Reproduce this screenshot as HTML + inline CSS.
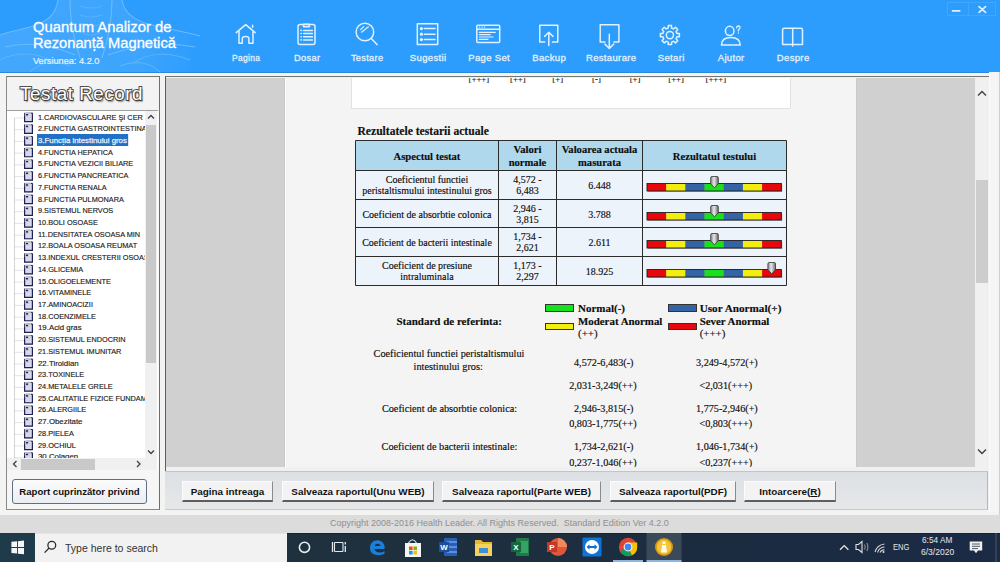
<!DOCTYPE html>
<html><head><meta charset="utf-8">
<style>
*{box-sizing:border-box;margin:0;padding:0}
html,body{width:1000px;height:562px;overflow:hidden;background:#f0f0f0;font-family:"Liberation Sans",sans-serif;position:relative}
.a{position:absolute}
#hdr{left:0;top:0;width:1000px;height:72.5px;background:#2c9dfd;border-bottom:1.5px solid #2a88e2}
body{background:#f3f4f2}
.ttl{color:#fff;-webkit-text-stroke:0.3px #fff;font-size:14.7px;left:33px;white-space:nowrap;line-height:16px}
.nav{color:#e4f1ff;-webkit-text-stroke:0.3px #e4f1ff;letter-spacing:0.35px;text-indent:0.35px;font-size:9.5px;top:52.4px;width:80px;text-align:center;white-space:nowrap}
.ico{top:20px}
#leftp{left:6px;top:76px;width:154px;height:434px;border:1px solid #8a8a8a;border-top:1.4px solid #76766c;border-right:1.3px solid #6e6e6e;background:#f6f6f6}
#tree{left:7px;top:110px;width:151px;height:360px;background:#fff;border-top:1px solid #a0a0a0;overflow:hidden}
.ti{position:absolute;left:31px;transform:scaleX(0.915);transform-origin:0 0;font-size:8px;color:#1a1a1a;-webkit-text-stroke:0.15px #1a1a1a;white-space:nowrap;line-height:11px}
.sel{color:#e8f2ff;-webkit-text-stroke:0.25px #e8f2ff}
.sel:before{content:"";position:absolute;left:-0.6px;top:-0.5px;width:92.6px;height:11.2px;background:#2270c6;z-index:-1}
#tree{z-index:1}
#midp{left:165px;top:76px;width:824px;height:434px;border-top:1.5px solid #76766c;border-left:1.2px solid #5e5e5e;background:#f0f0f0}
#doc{left:166px;top:77.5px;width:809px;height:389px;background:#d0d0d0;overflow:hidden}
#page{left:120px;top:0;width:572px;height:389px;background:#f5f5f5}
.d{position:absolute;font-family:"Liberation Serif",serif;white-space:nowrap;color:#0d0d0d;-webkit-text-stroke:0.15px #0d0d0d}
.serif{font-family:"Liberation Serif",serif}
table.res{position:absolute;border-collapse:collapse;font-family:"Liberation Serif",serif;font-size:10.2px;color:#111}
.btn{position:absolute;top:481px;height:21px;background:#f3f3f3;border-right:1.5px solid #8a8a8a;border-bottom:2px solid #5e5e5e;border-top:1px solid #fcfcfc;border-left:1px solid #fcfcfc;font-weight:bold;font-size:9.9px;text-align:center;line-height:19.5px;color:#111;white-space:nowrap}
#bar{left:165px;top:471px;width:823px;height:39px;background:linear-gradient(#dce0e4,#e6e7e9);border-top:1px solid #c4c4c4;border-right:1px solid #b8b8b8;border-bottom:1px solid #c8c8c8}
#foot{left:0;top:514.5px;width:1000px;height:18.5px;background:#dcdcdc}
#task{left:0;top:532.5px;width:1000px;height:29.5px;background:linear-gradient(90deg,#1f3440 0%,#1e303e 40%,#1c2c40 70%,#1b2a45 100%);border-top:1px solid #18222c}
</style></head><body>
<div id="hdr" class="a"></div>
<svg class="a" style="left:0;top:0" width="1000" height="72" viewBox="0 0 1000 72"><defs><linearGradient id="hfade" x1="0" x2="1" y1="0" y2="0"><stop offset="0" stop-color="#fff" stop-opacity="0.22"/><stop offset="0.7" stop-color="#fff" stop-opacity="0.16"/><stop offset="1" stop-color="#fff" stop-opacity="0"/></linearGradient></defs>
<g fill="none" stroke="#a9d6fb" stroke-width="1.1" opacity="0.5">
<path d="M58,0 C56,14 48,22 30,27 C15,31 5,33 0,35 V72 H200 V36 C185,32 165,28 148,24 C132,19 124,12 122,0 Z" fill="url(#hfade)" stroke="none"/><path d="M58,0 C56,14 48,22 30,27 C15,31 5,33 0,35 M200,36 C185,32 165,28 148,24 C132,19 124,12 122,0"/>
<path d="M70,0 C70,20 74,40 80,58 M112,0 C112,20 108,40 102,58" />
<path d="M80,6 Q91,10 102,6 M80,15 Q91,19 102,15 M80,24 Q91,28 102,24 M82,33 Q91,37 100,33" opacity="0.6"/>
<path d="M5,47 C25,42 50,44 75,55 M195,47 C170,42 140,44 108,55"/>
<path d="M0,60 C15,52 35,52 50,60 M190,60 C170,52 150,52 135,62 M30,72 C40,62 55,60 70,66 M160,72 C150,62 135,60 120,66" opacity="0.7"/>
</g>
<g fill="none" stroke="#e2f1ff" stroke-width="1.5" stroke-linejoin="round" stroke-linecap="round">
<!-- home -->
<path d="M236.2,32.6 L245.7,24.6 L255.2,32.6 M239,31 L239,43.2 L242.3,43.2 L242.3,38.5 Q242.3,36.5 245.6,36.5 Q248.9,36.5 248.9,38.5 L248.9,43.2 L253,43.2 L253,31 M252.6,25.2 L252.6,27.2"/>
<!-- clipboard -->
<rect x="298" y="24.6" width="17" height="19.8" rx="2"/>
<path d="M303.5,26.8 L303.5,24.2 L309.3,24.2 L309.3,26.8 Z"/>
<path d="M303.6,30.4 H312.4 M303.6,33.5 H312.4 M303.6,36.7 H312.4 M303.6,39.9 H312.4"/>
<path d="M301,30.4 h0.3 M301,33.5 h0.3 M301,36.7 h0.3 M301,39.9 h0.3" stroke-width="1.6"/>
<!-- magnifier -->
<circle cx="364.9" cy="32" r="8.8"/>
<path d="M371.3,38.6 L377,44.6"/>
<path d="M360.6,29.6 L363.8,26.6 M361.5,32.2 L368.4,26.8" stroke-width="1.2"/>
<!-- list -->
<rect x="417.3" y="23.8" width="20.4" height="20.6"/>
<path d="M424.3,28.6 H435 M424.3,34.2 H435 M424.3,39.6 H435"/>
<circle cx="421.4" cy="28.6" r="0.9" fill="#e2f1ff"/><circle cx="421.4" cy="34.2" r="0.9" fill="#e2f1ff"/><circle cx="421.4" cy="39.6" r="0.9" fill="#e2f1ff"/>
<!-- page set -->
<rect x="476.8" y="25.2" width="22.9" height="17.3" rx="1"/>
<path d="M476.8,29.3 H499.7"/>
<path d="M479.3,32.4 H495.2 M479.3,34.7 H490.2 M479.3,37 H493 M479.3,39.4 H488" stroke-width="1.2"/>
<path d="M479.4,27.2 h0.2 M481.9,27.2 h0.2 M484.4,27.2 h0.2" stroke-width="1.3"/>
<!-- backup -->
<path d="M544.7,41.9 H539.8 V25.2 H557.8 V41.9 H552.4"/>
<path d="M548.8,45.5 V32.2 M544.6,36.4 L548.8,32.2 L553,36.4"/>
<!-- restore -->
<path d="M604.9,42.1 H600.2 V24.8 H618.9 V42.1 H613.9"/>
<path d="M609.3,34.2 V48.4 M604.8,44 L609.3,48.4 L613.8,44"/>
<!-- gear -->
<path d="M679.4,33.5 L679.4,36.7 L676.9,36.8 L676.1,38.8 L677.7,40.7 L675.5,42.9 L673.6,41.3 L671.6,42.1 L671.5,44.6 L668.3,44.6 L668.2,42.1 L666.2,41.3 L664.3,42.9 L662.1,40.7 L663.7,38.8 L662.9,36.8 L660.4,36.7 L660.4,33.5 L662.9,33.4 L663.7,31.4 L662.1,29.5 L664.3,27.3 L666.2,28.9 L668.2,28.1 L668.3,25.6 L671.5,25.6 L671.6,28.1 L673.6,28.9 L675.5,27.3 L677.7,29.5 L676.1,31.4 L676.9,33.4Z"/>
<circle cx="669.9" cy="35.1" r="3.6"/>
<!-- help person -->
<ellipse cx="729.7" cy="30.9" rx="4.3" ry="4.6"/>
<path d="M721.4,45 Q721.6,37.4 730.8,37.4 Q740,37.4 740.3,45 Z"/>
<path d="M736.6,27.8 Q736.8,26 738.4,26 Q740.2,26.1 740,27.7 Q739.8,29 738.4,29.8 L738.4,31" stroke-width="1.3"/>
<path d="M738.4,32.8 v0.3" stroke-width="1.3"/>
<!-- book -->
<path d="M792.7,28.2 H784.2 Q782.6,28.2 782.6,29.8 V44.6 H792.7 V46 M792.7,28.2 V44.6 M792.7,28.2 H800.9 Q802.5,28.2 802.5,29.8 V44.6 H792.7"/>
</g>
<g fill="none" stroke="#9fd0ff" stroke-width="1" opacity="0.18"><rect x="947.5" y="2.5" width="48" height="13"/><path d="M968.5,2.5 V15.5"/></g>
<g stroke="#dff1ff" stroke-width="1.6" fill="none" stroke-linecap="round">
<path d="M952.5,10.9 H959.8"/>
<path d="M979,6.6 L985.6,12.4 M985.6,6.6 L979,12.4"/>
</g>
</svg>
<div class="a ttl" style="top:19.2px;left:33px;font-size:14.85px">Quantum Analizor de</div>
<div class="a ttl" style="top:34.6px;left:33px">Rezonanță Magnetică</div>
<div class="a" style="left:33px;top:56.2px;color:#e8f3ff;font-size:9.2px;-webkit-text-stroke:0.2px #e8f3ff;white-space:nowrap">Versiunea: 4.2.0</div>

<div class="a nav" style="left:206px;transform:scaleX(0.89)">Pagina</div>
<div class="a nav" style="left:266.8px;transform:scaleX(0.97)">Dosar</div>
<div class="a nav" style="left:327.4px;transform:scaleX(0.965)">Testare</div>
<div class="a nav" style="left:388px">Sugestii</div>
<div class="a nav" style="left:449px">Page Set</div>
<div class="a nav" style="left:509px">Backup</div>
<div class="a nav" style="left:571px">Restaurare</div>
<div class="a nav" style="left:631px">Setari</div>
<div class="a nav" style="left:691px">Ajutor</div>
<div class="a nav" style="left:753px">Despre</div>

<div id="leftp" class="a"></div>
<div class="a" style="left:7px;top:77px;width:152px;height:33px;background:#f3f3f3"></div>
<div class="a" style="left:20px;top:83.4px;font-size:18.8px;color:#fff;-webkit-text-stroke:2px #505050;paint-order:stroke fill;text-shadow:1.2px 1.5px 1.5px rgba(0,0,0,.45);white-space:nowrap;letter-spacing:0.55px">Testat Record</div>
<div id="tree" class="a">
<svg class="a" style="left:0;top:0" width="151" height="360">
<defs><g id="fi" stroke-dasharray="none"><rect x="0.5" y="0.3" width="8" height="8.7" fill="#d9d6f0"/><path d="M0.6,0.3 V9 H8.4 V1.6" fill="none" stroke="#1e2150" stroke-width="1.2"/><path d="M2,0.4 H7" stroke="#9a9ac4" stroke-width="0.8"/><path d="M7,0.6 H8.6 V2" fill="none" stroke="#1e2150" stroke-width="1"/><rect x="1.3" y="0.9" width="3.2" height="2.4" fill="#1e2150"/></g></defs>
<path d="M7.5,7 V360" stroke="#d4d4d4" stroke-width="1"/>
<g stroke="#c8c8c8" stroke-width="1" stroke-dasharray="1,1" fill="none"><path d="M7.5,7.0H17"/><use href="#fi" x="17" y="1.60"/><path d="M7.5,18.7H17"/><use href="#fi" x="17" y="13.32"/><path d="M7.5,30.4H17"/><use href="#fi" x="17" y="25.03"/><path d="M7.5,42.1H17"/><use href="#fi" x="17" y="36.74"/><path d="M7.5,53.9H17"/><use href="#fi" x="17" y="48.46"/><path d="M7.5,65.6H17"/><use href="#fi" x="17" y="60.18"/><path d="M7.5,77.3H17"/><use href="#fi" x="17" y="71.89"/><path d="M7.5,89.0H17"/><use href="#fi" x="17" y="83.60"/><path d="M7.5,100.7H17"/><use href="#fi" x="17" y="95.32"/><path d="M7.5,112.4H17"/><use href="#fi" x="17" y="107.03"/><path d="M7.5,124.2H17"/><use href="#fi" x="17" y="118.75"/><path d="M7.5,135.9H17"/><use href="#fi" x="17" y="130.47"/><path d="M7.5,147.6H17"/><use href="#fi" x="17" y="142.18"/><path d="M7.5,159.3H17"/><use href="#fi" x="17" y="153.89"/><path d="M7.5,171.0H17"/><use href="#fi" x="17" y="165.61"/><path d="M7.5,182.7H17"/><use href="#fi" x="17" y="177.33"/><path d="M7.5,194.4H17"/><use href="#fi" x="17" y="189.04"/><path d="M7.5,206.2H17"/><use href="#fi" x="17" y="200.76"/><path d="M7.5,217.9H17"/><use href="#fi" x="17" y="212.47"/><path d="M7.5,229.6H17"/><use href="#fi" x="17" y="224.19"/><path d="M7.5,241.3H17"/><use href="#fi" x="17" y="235.90"/><path d="M7.5,253.0H17"/><use href="#fi" x="17" y="247.61"/><path d="M7.5,264.7H17"/><use href="#fi" x="17" y="259.33"/><path d="M7.5,276.4H17"/><use href="#fi" x="17" y="271.05"/><path d="M7.5,288.2H17"/><use href="#fi" x="17" y="282.76"/><path d="M7.5,299.9H17"/><use href="#fi" x="17" y="294.48"/><path d="M7.5,311.6H17"/><use href="#fi" x="17" y="306.19"/><path d="M7.5,323.3H17"/><use href="#fi" x="17" y="317.91"/><path d="M7.5,335.0H17"/><use href="#fi" x="17" y="329.62"/><path d="M7.5,346.7H17"/><use href="#fi" x="17" y="341.34"/></g>
</svg>
<div class="ti" style="top:0.50px;">1.CARDIOVASCULARE ŞI CER</div>
<div class="ti" style="top:12.21px;">2.FUNCTIA GASTROINTESTINAL</div>
<div class="ti sel" style="top:23.93px;transform:scaleX(0.98)">3.Funcția intestinului gros</div>
<div class="ti" style="top:35.64px;">4.FUNCTIA HEPATICA</div>
<div class="ti" style="top:47.36px;">5.FUNCTIA VEZICII BILIARE</div>
<div class="ti" style="top:59.08px;">6.FUNCTIA PANCREATICA</div>
<div class="ti" style="top:70.79px;">7.FUNCTIA RENALA</div>
<div class="ti" style="top:82.50px;">8.FUNCTIA PULMONARA</div>
<div class="ti" style="top:94.22px;">9.SISTEMUL NERVOS</div>
<div class="ti" style="top:105.94px;">10.BOLI OSOASE</div>
<div class="ti" style="top:117.65px;">11.DENSITATEA OSOASA MIN</div>
<div class="ti" style="top:129.37px;">12.BOALA OSOASA REUMAT</div>
<div class="ti" style="top:141.08px;">13.INDEXUL CRESTERII OSOASE</div>
<div class="ti" style="top:152.79px;">14.GLICEMIA</div>
<div class="ti" style="top:164.51px;">15.OLIGOELEMENTE</div>
<div class="ti" style="top:176.22px;">16.VITAMINELE</div>
<div class="ti" style="top:187.94px;">17.AMINOACIZII</div>
<div class="ti" style="top:199.66px;">18.COENZIMELE</div>
<div class="ti" style="top:211.37px;transform:scaleX(0.98)">19.Acid gras</div>
<div class="ti" style="top:223.09px;">20.SISTEMUL ENDOCRIN</div>
<div class="ti" style="top:234.80px;">21.SISTEMUL IMUNITAR</div>
<div class="ti" style="top:246.51px;transform:scaleX(0.98)">22.Tiroidian</div>
<div class="ti" style="top:258.23px;">23.TOXINELE</div>
<div class="ti" style="top:269.94px;">24.METALELE GRELE</div>
<div class="ti" style="top:281.66px;">25.CALITATILE FIZICE FUNDAM</div>
<div class="ti" style="top:293.38px;">26.ALERGIILE</div>
<div class="ti" style="top:305.09px;transform:scaleX(0.98)">27.Obezitate</div>
<div class="ti" style="top:316.81px;">28.PIELEA</div>
<div class="ti" style="top:328.52px;">29.OCHIUL</div>
<div class="ti" style="top:340.24px;transform:scaleX(0.98)">30.Colagen</div>
<div class="a" style="left:138px;top:0;width:12px;height:347px;background:#f0f0f0"></div>
<div class="a" style="left:139px;top:14px;width:10px;height:238px;background:#c9c9c9"></div>
<div class="a" style="left:0;top:347px;width:150px;height:13px;background:#f0f0f0"></div>
<div class="a" style="left:13.5px;top:348px;width:74.5px;height:11px;background:#c9c9c9"></div>
<svg class="a" style="left:0;top:0" width="151" height="360"><g fill="none" stroke="#404040" stroke-width="1.3">
<path d="M141,7.5 L144,4.5 L147,7.5"/><path d="M141,339.5 L144,342.5 L147,339.5"/><path d="M9.5,350 L6.5,353 L9.5,356"/><path d="M130,350 L133,353 L130,356"/></g></svg>
</div>
<div id="midp" class="a"></div>
<div id="doc" class="a"><div class="a" style="left:-166px;top:-77.5px;width:1000px;height:562px">
<div class="a" style="left:284px;top:0;width:573px;height:562px;background:#f4f4f4;border-left:1px solid #c9c9c9;border-right:1px solid #cacaca;box-shadow:inset 1px 0 0 #fdfdfd"></div>
<div class="a" style="left:351px;top:60px;width:440px;height:48.5px;background:#fff;border:1px solid #e2e2e2"></div>
<div class="d" style="top:74.33px;font-size:8.8px;line-height:10px;color:#222;left:328.90px;width:300px;text-align:center;">[+++]</div>
<div class="d" style="top:74.33px;font-size:8.8px;line-height:10px;color:#222;left:367.85px;width:300px;text-align:center;">[++]</div>
<div class="d" style="top:74.33px;font-size:8.8px;line-height:10px;color:#222;left:407.75px;width:300px;text-align:center;">[+]</div>
<div class="d" style="top:74.33px;font-size:8.8px;line-height:10px;color:#222;left:446.50px;width:300px;text-align:center;">[-]</div>
<div class="d" style="top:74.33px;font-size:8.8px;line-height:10px;color:#222;left:485.10px;width:300px;text-align:center;">[+]</div>
<div class="d" style="top:74.33px;font-size:8.8px;line-height:10px;color:#222;left:526.10px;width:300px;text-align:center;">[++]</div>
<div class="d" style="top:74.33px;font-size:8.8px;line-height:10px;color:#222;left:565.85px;width:300px;text-align:center;">[+++]</div>
<div class="d" style="top:124.59px;font-size:11.6px;line-height:14px;font-weight:bold;color:#111;left:357.50px;">Rezultatele testarii actuale</div>
<div class="a" style="left:355.5px;top:140.5px;width:431.0px;height:30.0px;background:#afd8ec"></div>
<div class="a" style="left:355.5px;top:170.5px;width:431.0px;height:115.0px;background:#edf3fb"></div>
<svg class="a" style="left:0;top:0" width="1000" height="562"><g stroke="#2b2b2b" stroke-width="1" fill="none"><path d="M355.5,140.5 H786.5"/><path d="M355.5,170.5 H786.5"/><path d="M355.5,199.5 H786.5"/><path d="M355.5,227.5 H786.5"/><path d="M355.5,256.5 H786.5"/><path d="M355.5,285.5 H786.5"/><path d="M355.5,140.5 V285.5"/><path d="M498.5,140.5 V285.5"/><path d="M556.5,140.5 V285.5"/><path d="M642.5,140.5 V285.5"/><path d="M786.5,140.5 V285.5"/></g></svg>
<div class="d" style="top:150.02px;font-size:10.6px;line-height:13px;font-weight:bold;left:277.00px;width:300px;text-align:center;">Aspectul testat</div>
<div class="d" style="top:143.22px;font-size:10.6px;line-height:13px;font-weight:bold;left:377.50px;width:300px;text-align:center;">Valori</div>
<div class="d" style="top:155.92px;font-size:10.6px;line-height:13px;font-weight:bold;left:377.50px;width:300px;text-align:center;">normale</div>
<div class="d" style="top:143.22px;font-size:10.6px;line-height:13px;font-weight:bold;left:449.50px;width:300px;text-align:center;">Valoarea actuala</div>
<div class="d" style="top:155.92px;font-size:10.6px;line-height:13px;font-weight:bold;left:449.50px;width:300px;text-align:center;">masurata</div>
<div class="d" style="top:150.02px;font-size:10.6px;line-height:13px;font-weight:bold;left:564.50px;width:300px;text-align:center;">Rezultatul testului</div>
<div class="d" style="top:173.93px;font-size:10px;line-height:12px;left:277.00px;width:300px;text-align:center;">Coeficientul functiei</div>
<div class="d" style="top:185.43px;font-size:10px;line-height:12px;left:277.00px;width:300px;text-align:center;">peristaltismului intestinului gros</div>
<div class="d" style="top:173.93px;font-size:10px;line-height:12px;left:377.50px;width:300px;text-align:center;">4,572 -</div>
<div class="d" style="top:185.43px;font-size:10px;line-height:12px;left:377.50px;width:300px;text-align:center;">6,483</div>
<div class="d" style="top:179.62px;font-size:10px;line-height:12px;left:449.50px;width:300px;text-align:center;">6.448</div>
<svg class="a" style="left:645.7px;top:176.0px" width="140" height="18"><rect x="2" y="8.5" width="134.3" height="7.5" fill="#777" opacity="0.55"/><rect x="1.00" y="7.5" width="19.39" height="7.5" fill="#e8070a"/><rect x="20.19" y="7.5" width="19.39" height="7.5" fill="#f4ee10"/><rect x="39.37" y="7.5" width="19.39" height="7.5" fill="#3264a6"/><rect x="58.56" y="7.5" width="19.39" height="7.5" fill="#18e01c"/><rect x="77.74" y="7.5" width="19.39" height="7.5" fill="#3264a6"/><rect x="96.93" y="7.5" width="19.39" height="7.5" fill="#f4ee10"/><rect x="116.11" y="7.5" width="19.39" height="7.5" fill="#e8070a"/><rect x="1" y="7.5" width="134.3" height="7.5" fill="none" stroke="#1e1e1e" stroke-width="0.9"/><defs><linearGradient id="pg0" x1="0" x2="1"><stop offset="0" stop-color="#8a8a8a"/><stop offset="0.45" stop-color="#e8e8e8"/><stop offset="1" stop-color="#6a6a6a"/></linearGradient></defs><path d="M64.7,1.8 Q64.7,0.5 66.0,0.5 H71.0 Q72.3,0.5 72.3,1.8 V7.8 L68.5,11.8 L64.7,7.8 Z" fill="url(#pg0)" stroke="#333" stroke-width="0.8"/></svg>
<div class="d" style="top:208.62px;font-size:10px;line-height:12px;left:277.00px;width:300px;text-align:center;">Coeficient de absorbtie colonica</div>
<div class="d" style="top:202.93px;font-size:10px;line-height:12px;left:377.50px;width:300px;text-align:center;">2,946 -</div>
<div class="d" style="top:214.43px;font-size:10px;line-height:12px;left:377.50px;width:300px;text-align:center;">3,815</div>
<div class="d" style="top:208.62px;font-size:10px;line-height:12px;left:449.50px;width:300px;text-align:center;">3.788</div>
<svg class="a" style="left:645.7px;top:205.0px" width="140" height="18"><rect x="2" y="8.5" width="134.3" height="7.5" fill="#777" opacity="0.55"/><rect x="1.00" y="7.5" width="19.39" height="7.5" fill="#e8070a"/><rect x="20.19" y="7.5" width="19.39" height="7.5" fill="#f4ee10"/><rect x="39.37" y="7.5" width="19.39" height="7.5" fill="#3264a6"/><rect x="58.56" y="7.5" width="19.39" height="7.5" fill="#18e01c"/><rect x="77.74" y="7.5" width="19.39" height="7.5" fill="#3264a6"/><rect x="96.93" y="7.5" width="19.39" height="7.5" fill="#f4ee10"/><rect x="116.11" y="7.5" width="19.39" height="7.5" fill="#e8070a"/><rect x="1" y="7.5" width="134.3" height="7.5" fill="none" stroke="#1e1e1e" stroke-width="0.9"/><defs><linearGradient id="pg1" x1="0" x2="1"><stop offset="0" stop-color="#8a8a8a"/><stop offset="0.45" stop-color="#e8e8e8"/><stop offset="1" stop-color="#6a6a6a"/></linearGradient></defs><path d="M64.7,1.8 Q64.7,0.5 66.0,0.5 H71.0 Q72.3,0.5 72.3,1.8 V7.8 L68.5,11.8 L64.7,7.8 Z" fill="url(#pg1)" stroke="#333" stroke-width="0.8"/></svg>
<div class="d" style="top:236.62px;font-size:10px;line-height:12px;left:277.00px;width:300px;text-align:center;">Coeficient de bacterii intestinale</div>
<div class="d" style="top:230.93px;font-size:10px;line-height:12px;left:377.50px;width:300px;text-align:center;">1,734 -</div>
<div class="d" style="top:242.43px;font-size:10px;line-height:12px;left:377.50px;width:300px;text-align:center;">2,621</div>
<div class="d" style="top:236.62px;font-size:10px;line-height:12px;left:449.50px;width:300px;text-align:center;">2.611</div>
<svg class="a" style="left:645.7px;top:233.0px" width="140" height="18"><rect x="2" y="8.5" width="134.3" height="7.5" fill="#777" opacity="0.55"/><rect x="1.00" y="7.5" width="19.39" height="7.5" fill="#e8070a"/><rect x="20.19" y="7.5" width="19.39" height="7.5" fill="#f4ee10"/><rect x="39.37" y="7.5" width="19.39" height="7.5" fill="#3264a6"/><rect x="58.56" y="7.5" width="19.39" height="7.5" fill="#18e01c"/><rect x="77.74" y="7.5" width="19.39" height="7.5" fill="#3264a6"/><rect x="96.93" y="7.5" width="19.39" height="7.5" fill="#f4ee10"/><rect x="116.11" y="7.5" width="19.39" height="7.5" fill="#e8070a"/><rect x="1" y="7.5" width="134.3" height="7.5" fill="none" stroke="#1e1e1e" stroke-width="0.9"/><defs><linearGradient id="pg2" x1="0" x2="1"><stop offset="0" stop-color="#8a8a8a"/><stop offset="0.45" stop-color="#e8e8e8"/><stop offset="1" stop-color="#6a6a6a"/></linearGradient></defs><path d="M64.7,1.8 Q64.7,0.5 66.0,0.5 H71.0 Q72.3,0.5 72.3,1.8 V7.8 L68.5,11.8 L64.7,7.8 Z" fill="url(#pg2)" stroke="#333" stroke-width="0.8"/></svg>
<div class="d" style="top:259.93px;font-size:10px;line-height:12px;left:277.00px;width:300px;text-align:center;">Coeficient de presiune</div>
<div class="d" style="top:271.43px;font-size:10px;line-height:12px;left:277.00px;width:300px;text-align:center;">intraluminala</div>
<div class="d" style="top:259.93px;font-size:10px;line-height:12px;left:377.50px;width:300px;text-align:center;">1,173 -</div>
<div class="d" style="top:271.43px;font-size:10px;line-height:12px;left:377.50px;width:300px;text-align:center;">2,297</div>
<div class="d" style="top:265.62px;font-size:10px;line-height:12px;left:449.50px;width:300px;text-align:center;">18.925</div>
<svg class="a" style="left:645.7px;top:262.0px" width="140" height="18"><rect x="2" y="8.5" width="134.3" height="7.5" fill="#777" opacity="0.55"/><rect x="1.00" y="7.5" width="19.39" height="7.5" fill="#e8070a"/><rect x="20.19" y="7.5" width="19.39" height="7.5" fill="#f4ee10"/><rect x="39.37" y="7.5" width="19.39" height="7.5" fill="#3264a6"/><rect x="58.56" y="7.5" width="19.39" height="7.5" fill="#18e01c"/><rect x="77.74" y="7.5" width="19.39" height="7.5" fill="#3264a6"/><rect x="96.93" y="7.5" width="19.39" height="7.5" fill="#f4ee10"/><rect x="116.11" y="7.5" width="19.39" height="7.5" fill="#e8070a"/><rect x="1" y="7.5" width="134.3" height="7.5" fill="none" stroke="#1e1e1e" stroke-width="0.9"/><defs><linearGradient id="pg3" x1="0" x2="1"><stop offset="0" stop-color="#8a8a8a"/><stop offset="0.45" stop-color="#e8e8e8"/><stop offset="1" stop-color="#6a6a6a"/></linearGradient></defs><path d="M121.9,1.8 Q121.9,0.5 123.2,0.5 H128.2 Q129.5,0.5 129.5,1.8 V7.8 L125.7,11.8 L121.9,7.8 Z" fill="url(#pg3)" stroke="#333" stroke-width="0.8"/></svg>
<div class="d" style="top:315.49px;font-size:11px;line-height:13px;font-weight:bold;left:396.40px;">Standard de referinta:</div>
<div class="a" style="left:544.8px;top:304px;width:29.100000000000023px;height:7.600000000000023px;background:#18e01c;border:1px solid #333"></div>
<div class="a" style="left:667.7px;top:304px;width:29.09999999999991px;height:7.600000000000023px;background:#3264a6;border:1px solid #333"></div>
<div class="a" style="left:544.8px;top:322.9px;width:29.100000000000023px;height:7.5px;background:#f4ee10;border:1px solid #333"></div>
<div class="a" style="left:667.7px;top:322.9px;width:29.09999999999991px;height:7.5px;background:#e8070a;border:1px solid #333"></div>
<div class="d" style="top:301.99px;font-size:11px;line-height:13px;font-weight:bold;left:578.00px;">Normal(-)</div>
<div class="d" style="top:301.92px;font-size:11.2px;line-height:13px;font-weight:bold;left:699.70px;">Usor Anormal(+)</div>
<div class="d" style="top:314.52px;font-size:10.9px;line-height:13px;font-weight:bold;left:578.00px;">Moderat Anormal</div>
<div class="d" style="top:326.82px;font-size:10.9px;line-height:13px;left:578.00px;">(++)</div>
<div class="d" style="top:314.52px;font-size:10.9px;line-height:13px;font-weight:bold;left:699.70px;">Sever Anormal</div>
<div class="d" style="top:326.82px;font-size:10.9px;line-height:13px;left:699.70px;">(+++)</div>
<div class="d" style="top:348.14px;font-size:10.25px;line-height:12px;left:299.00px;width:300px;text-align:center;">Coeficientul functiei peristaltismului</div>
<div class="d" style="top:360.74px;font-size:10.25px;line-height:12px;left:298.20px;width:300px;text-align:center;">intestinului gros:</div>
<div class="d" style="top:356.56px;font-size:10.2px;line-height:12px;left:574.00px;">4,572-6,483(-)</div>
<div class="d" style="top:356.56px;font-size:10.2px;line-height:12px;left:696.00px;">3,249-4,572(+)</div>
<div class="d" style="top:379.66px;font-size:10.2px;line-height:12px;left:569.20px;">2,031-3,249(++)</div>
<div class="d" style="top:379.66px;font-size:10.2px;line-height:12px;left:699.40px;">&lt;2,031(+++)</div>
<div class="d" style="top:402.76px;font-size:10.2px;line-height:12px;left:574.00px;">2,946-3,815(-)</div>
<div class="d" style="top:402.76px;font-size:10.2px;line-height:12px;left:696.00px;">1,775-2,946(+)</div>
<div class="d" style="top:417.56px;font-size:10.2px;line-height:12px;left:569.20px;">0,803-1,775(++)</div>
<div class="d" style="top:417.56px;font-size:10.2px;line-height:12px;left:699.40px;">&lt;0,803(+++)</div>
<div class="d" style="top:441.36px;font-size:10.2px;line-height:12px;left:574.00px;">1,734-2,621(-)</div>
<div class="d" style="top:441.36px;font-size:10.2px;line-height:12px;left:696.00px;">1,046-1,734(+)</div>
<div class="d" style="top:456.56px;font-size:10.2px;line-height:12px;left:569.20px;">0,237-1,046(++)</div>
<div class="d" style="top:456.56px;font-size:10.2px;line-height:12px;left:699.40px;">&lt;0,237(+++)</div>
<div class="d" style="top:402.74px;font-size:10.25px;line-height:12px;left:299.50px;width:300px;text-align:center;">Coeficient de absorbtie colonica:</div>
<div class="d" style="top:441.34px;font-size:10.25px;line-height:12px;left:299.50px;width:300px;text-align:center;">Coeficient de bacterii intestinale:</div>
</div></div>
<div class="a" style="left:975px;top:77px;width:14px;height:389px;background:#f0f0f0"></div>
<div class="a" style="left:976.2px;top:180.4px;width:11.7px;height:103px;background:#cdcdcd"></div>
<svg class="a" style="left:975px;top:77px" width="14" height="389"><g fill="none" stroke="#404040" stroke-width="1.4"><path d="M3,18.5 L7,14.5 L11,18.5"/><path d="M3,372.5 L7,376.5 L11,372.5"/></g></svg>
<div class="a" style="left:989px;top:72px;width:11px;height:440px;background:#f5f5f5;border-left:1px solid #fbfbfb"></div>
<div class="a" style="left:998.5px;top:72px;width:1.5px;height:461px;background:#cfcfcf"></div>
<div id="bar" class="a"></div>
<div class="a btn" style="left:12px;top:479px;width:135px;height:25px;border:1px solid #6f7f8f;border-radius:3px;background:linear-gradient(#fbfbfb,#e9eef3);line-height:23px;font-size:9.6px;border-color:#5f6f80">Raport cuprinzător privind</div>
<div class="a btn" style="left:182px;width:91px">Pagina intreaga</div>
<div class="a btn" style="left:282px;width:152px">Salveaza raportul(Unu WEB)</div>
<div class="a btn" style="left:442px;width:159px">Salveaza raportul(Parte WEB)</div>
<div class="a btn" style="left:610px;width:126px">Salveaza raportul(PDF)</div>
<div class="a btn" style="left:744px;width:92px">Intoarcere(<u>R</u>)</div>
<div id="foot" class="a"></div>
<div class="a" style="left:330px;top:518px;font-size:9px;color:#8f8f8f;white-space:nowrap">Copyright 2008-2016 Health Leader. All Rights Reserved.&nbsp; Standard Edition Ver 4.2.0</div>
<div id="task" class="a"></div>
<div class="a" style="left:0;top:533px;width:35px;height:29px;background:#1f3a4a"></div>
<svg class="a" style="left:0;top:533px" width="35" height="29"><g fill="#f4f7f9"><path d="M11.4,8.8 L17,8.3 V14 H11.4 Z"/><path d="M17.9,8.2 L24,7.6 V14 H17.9 Z"/><path d="M11.4,14.9 H17 V20.6 L11.4,20.1 Z"/><path d="M17.9,14.9 H24 V21.3 L17.9,20.7 Z"/></g></svg>
<div class="a" style="left:35px;top:533px;width:252px;height:29px;background:#f2f2f2;border-top:1px solid #e4e4e4"></div>
<svg class="a" style="left:35px;top:533px" width="30" height="29"><g fill="none" stroke="#2a2a2a" stroke-width="1.3"><circle cx="16.8" cy="12.3" r="3.9"/><path d="M13.9,15.3 L9.6,19.6"/></g></svg>
<div class="a" style="left:64.5px;top:541.9px;font-size:11.2px;color:#333;white-space:nowrap;transform:scaleX(0.94);transform-origin:0 0">Type here to search</div>
<svg class="a" style="left:287px;top:533px" width="713" height="29">
<circle cx="17.5" cy="14.3" r="5.1" fill="none" stroke="#e9eef1" stroke-width="1.6"/>
<g fill="none" stroke="#e3e8eb" stroke-width="1.1"><path d="M47.5,9.5 H56 M47.5,18.5 H56 M47.5,9.5 V18.5 M56,9.5 V18.5"/><path d="M45.5,9 V19" stroke-width="1.3"/><path d="M58.3,9 V11.5 M58.3,13 V19" stroke-width="1.3"/></g>
<g transform="translate(90,14)"><path d="M-7,1 C-7,-6 0,-8.5 4.5,-5.5 C7.5,-3.5 8,0 7.5,2 H-2.5 C-2,5.5 3,6.5 7.5,4.2 V7 C1,9.5 -7,8 -7,1 Z M-2.3,-1 H3.5 C3,-4 -1.7,-4 -2.3,-1 Z" fill="#1a7fd9"/></g>
<g transform="translate(117,3)"><path d="M4.5,7 Q8.5,0.5 12.5,7" fill="none" stroke="#e8e8e8" stroke-width="1.2"/><rect x="1" y="7" width="16" height="14" fill="#f5f5f5"/><rect x="5" y="10.5" width="3.6" height="3.6" fill="#f25022"/><rect x="9.4" y="10.5" width="3.6" height="3.6" fill="#7fba00"/><rect x="5" y="14.9" width="3.6" height="3.6" fill="#00a4ef"/><rect x="9.4" y="14.9" width="3.6" height="3.6" fill="#ffb900"/></g>
<g transform="translate(152,5)"><rect x="5" y="0" width="13" height="18" rx="1" fill="#2b5fb4"/><rect x="8" y="3" width="10" height="2" fill="#5b8fe0"/><rect x="8" y="8" width="10" height="2" fill="#5b8fe0"/><rect x="8" y="13" width="10" height="2" fill="#5b8fe0"/><rect x="0" y="4" width="10" height="10" fill="#1d4e9e"/><text x="5" y="12.3" font-family="Liberation Sans" font-size="8" font-weight="bold" fill="#fff" text-anchor="middle">W</text></g>
<g transform="translate(188,5)"><path d="M0,2 H6 L8,4 H17 V18 H0 Z" fill="#e8b730"/><rect x="0" y="6" width="17" height="12" fill="#f6d160"/><rect x="4" y="10" width="9" height="5" fill="#3d8fd6"/></g>
<g transform="translate(224,5)"><rect x="5" y="0" width="13" height="18" rx="1" fill="#1e7b45"/><rect x="9" y="3" width="8" height="12" fill="#33a366"/><rect x="0" y="4" width="10" height="10" fill="#17673a"/><text x="5" y="12.3" font-family="Liberation Sans" font-size="8" font-weight="bold" fill="#fff" text-anchor="middle">X</text></g>
<g transform="translate(269,14)"><circle cx="2" cy="0" r="9" fill="#e0573a"/><path d="M2,-9 A9,9 0 0 1 11,0 H2 Z" fill="#f08a5a"/><rect x="-9" y="-5" width="10" height="10" fill="#c0392b"/><text x="-4" y="3.3" font-family="Liberation Sans" font-size="8" font-weight="bold" fill="#fff" text-anchor="middle">P</text></g>
<g transform="translate(305,14)"><rect x="-9.5" y="-9.5" width="19" height="19" rx="1" fill="#0e73d8"/><circle cx="0" cy="0" r="7" fill="#fff"/><path d="M-5.5,0 L-2.5,-2.8 V-1 H2.5 V-2.8 L5.5,0 L2.5,2.8 V1 H-2.5 V2.8 Z" fill="#0e73d8"/></g>
<g transform="translate(341,14)"><circle r="9.2" fill="#db4437"/><path d="M0,0 L-8,4.6 A9.2,9.2 0 0 0 4,8.3 Z" fill="#0f9d58"/><path d="M0,0 L4,8.3 A9.2,9.2 0 0 0 9.2,0 V-4.6 H0 Z" fill="#f4c20d"/><circle r="4.4" fill="#fff"/><circle r="3.4" fill="#4285f4"/></g>
<rect x="359.5" y="0" width="35" height="29" fill="#3b4a59"/>
<g transform="translate(377,14)"><circle r="9" fill="#d99a10"/><circle r="7.2" fill="#f3c63a"/><path d="M-1.5,-5.5 H1.5 V-3 H-1.5 Z M-2,-2 H2 L3,5.5 H-3 Z" fill="#fff" opacity="0.9"/></g>
<rect x="326" y="27" width="30" height="2" fill="#8fb6de"/>
<rect x="359.5" y="27" width="35" height="2" fill="#8fb6de"/>
<path d="M553,16.8 L557.2,12.6 L561.4,16.8" fill="none" stroke="#e8e8e8" stroke-width="1.3"/>
<g fill="none" stroke="#e0e0e0" stroke-width="1.1"><path d="M569,11.5 H571.5 L575,8.5 V19.5 L571.5,16.5 H569 Z"/><path d="M577.5,11.5 Q579,14 577.5,16.5 M579.8,10 Q582,14 579.8,18" stroke="#909090"/></g>
<g fill="none" stroke="#d0d0d0" stroke-width="1.1"><path d="M588,19 Q590,12 597.5,11 M590.5,19.5 Q592,14.5 597.5,14"/><path d="M593,19.5 Q594,17 597.5,16.8" /></g>
<circle cx="596.5" cy="19" r="1" fill="#e0e0e0"/>
<path d="M682.7,8.5 H695.2 V17.5 H691 L689,20.2 L687,17.5 H682.7 Z" fill="#f0f0f0"/>
<g stroke="#3a4a5a" stroke-width="0.9"><path d="M685,11 H693 M685,13.3 H693 M685,15.6 H691"/></g>
<rect x="708.5" y="0" width="1" height="29" fill="#4a5868"/>
</svg>
<div class="a" style="left:892.5px;top:541px;font-size:9.8px;color:#e8e8e8;white-space:nowrap;transform:scaleX(0.77);transform-origin:0 0">ENG</div>
<div class="a" style="left:921.8px;top:534px;font-size:9.6px;color:#e8e8e8;white-space:nowrap;transform:scaleX(0.86);transform-origin:0 0">6:54 AM</div>
<div class="a" style="left:921px;top:546px;font-size:9.6px;color:#e8e8e8;white-space:nowrap;transform:scaleX(0.89);transform-origin:0 0">6/3/2020</div>

</body></html>
